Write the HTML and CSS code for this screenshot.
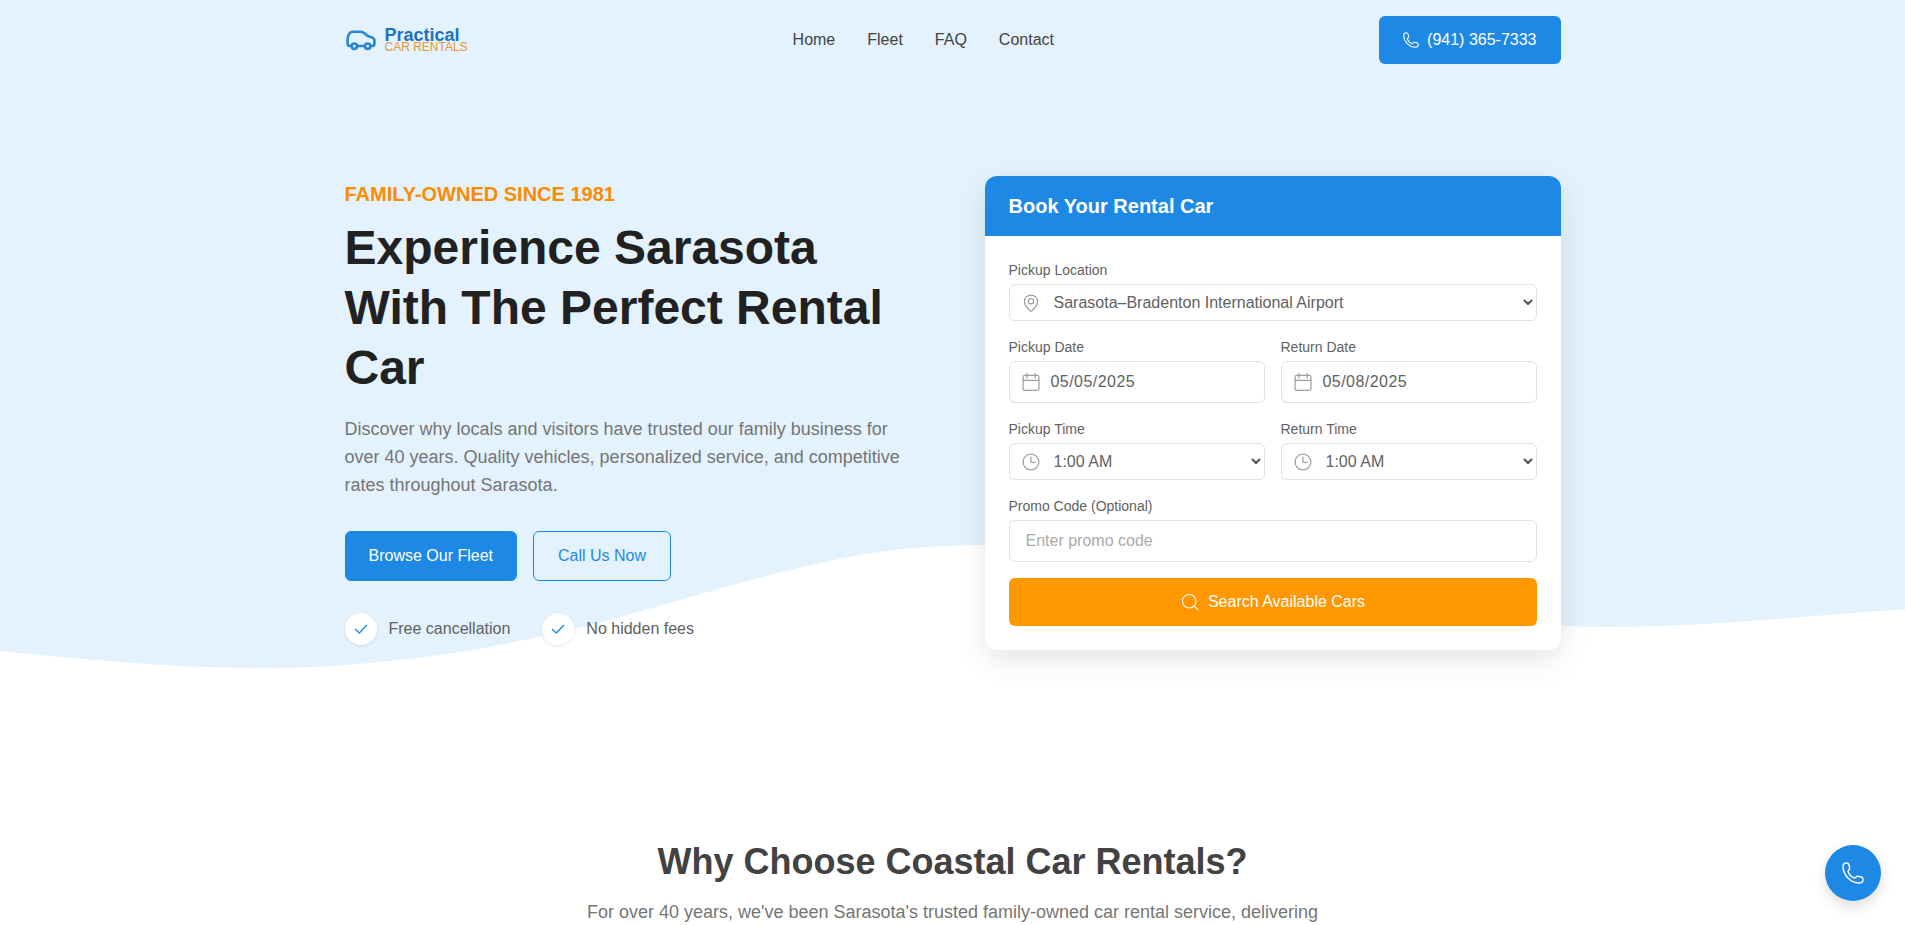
FILE: index.html
```html
<!DOCTYPE html>
<html lang="en">
<head>
<meta charset="utf-8">
<title>Practical Car Rentals</title>
<link rel="stylesheet" href="styles.css">
</head>
<body>
<svg class="symbols" aria-hidden="true">
  <symbol id="phone" viewBox="-1 -1 23 23"><path d="M0 4C0 1.500 1.500 0 3.500 0C5.400 0 6 .500 6.300 2L7 5.500C7.300 7.200 5.300 7.400 5.300 8.800C6.200 11.700 9.200 14.700 12.200 15.700C13.600 15.700 13.800 13.600 15.500 13.900L19.300 14.600C20.700 14.900 21 15.700 21 17.500C21 19.800 19 21 16.500 21C8 20.500 .500 13 0 4Z"/></symbol>
  <symbol id="calendar" viewBox="0 0 24 24"><rect x="2.500" y="4" width="19" height="18" rx="2"/><path d="M2.500 10h19M7 1.500V7M17 1.500V7"/></symbol>
  <symbol id="clock" viewBox="0 0 24 24"><circle cx="12" cy="12" r="9.500"/><path d="M12 6.200v6.300h5"/></symbol>
  <symbol id="pin" viewBox="0 0 24 24"><path d="M12 2.500c-4.400 0-7.900 3.300-7.900 7.500 0 5.800 6 10.600 7.200 11.600a1.100 1.100 0 0 0 1.400 0c1.200-1 7.200-5.800 7.200-11.600C19.900 5.800 16.400 2.500 12 2.500z"/><circle cx="12" cy="9.900" r="3.200"/></symbol>
  <symbol id="check" viewBox="0 0 24 24"><path d="M3.500 12.500 9.500 18 20.500 6.500"/></symbol>
  <symbol id="chevron" viewBox="0 0 10 7"><path d="M1.500 1.500 5 5 8.500 1.500"/></symbol>
</svg>

<section class="hero">
  <svg class="wave" viewBox="0 0 1905 762" preserveAspectRatio="none"><path d="M0 651C87 659.700 174 668 261 668C376 668 492 650.900 607 620.700C648 610 688 597.200 729 586C769 574.900 810 564.400 850 556.700C895 548.200 939 545 984 545C1200 545 1400 627 1608 627C1705 627 1800 616.500 1905 609.300V762H0Z"/></svg>

  <header class="header container">
    <a class="logo" href="#">
      <svg class="car" viewBox="0 0 30 21"><path d="M4.500 16H4C2.500 16 1.600 15 1.600 13.700V9.500C1.600 5.500 3.500 1.700 6.500 1.700H14.500C17.500 1.700 18.800 3.200 21 5.600C23 6.700 28.400 6.800 28.400 10.200V13.700C28.400 15 27.600 16 26.200 16H25.500M12 16H18"/><circle cx="8.300" cy="16.200" r="2.700"/><circle cx="21.700" cy="16.200" r="2.700"/></svg>
      <span class="wordmark"><b>Practical</b><small>CAR RENTALS</small></span>
    </a>
    <nav class="nav"><a href="#">Home</a><a href="#">Fleet</a><a href="#">FAQ</a><a href="#">Contact</a></nav>
    <a class="call" href="#"><svg class="call-icon"><use href="#phone"/></svg>(941) 365-7333</a>
  </header>

  <div class="hero-body container">
    <div class="intro">
      <p class="eyebrow">FAMILY-OWNED SINCE 1981</p>
      <h1>Experience Sarasota With The Perfect Rental Car</h1>
      <p class="lead">Discover why locals and visitors have trusted our family business for over 40 years. Quality vehicles, personalized service, and competitive rates throughout Sarasota.</p>
      <div class="actions"><a class="btn primary" href="#">Browse Our Fleet</a><a class="btn outline" href="#">Call Us Now</a></div>
      <ul class="perks">
        <li><span class="tick"><svg><use href="#check"/></svg></span>Free cancellation</li>
        <li><span class="tick"><svg><use href="#check"/></svg></span>No hidden fees</li>
      </ul>
    </div>

    <div class="card">
      <h2 class="card-title">Book Your Rental Car</h2>
      <div class="form">
        <div class="group"><span class="label">Pickup Location</span><div class="field select"><svg class="icon"><use href="#pin"/></svg><span>Sarasota–Bradenton International Airport</span><svg class="chevron"><use href="#chevron"/></svg></div></div>
        <div class="pair">
          <div class="group"><span class="label">Pickup Date</span><div class="field date"><svg class="icon"><use href="#calendar"/></svg><span>05/05/2025</span></div></div>
          <div class="group"><span class="label">Return Date</span><div class="field date"><svg class="icon"><use href="#calendar"/></svg><span>05/08/2025</span></div></div>
        </div>
        <div class="pair">
          <div class="group"><span class="label">Pickup Time</span><div class="field select"><svg class="icon"><use href="#clock"/></svg><span>1:00 AM</span><svg class="chevron"><use href="#chevron"/></svg></div></div>
          <div class="group"><span class="label">Return Time</span><div class="field select"><svg class="icon"><use href="#clock"/></svg><span>1:00 AM</span><svg class="chevron"><use href="#chevron"/></svg></div></div>
        </div>
        <div class="group"><span class="label">Promo Code (Optional)</span><div class="field promo">Enter promo code</div></div>
        <a class="search" href="#"><svg class="search-icon" viewBox="0 0 24 24"><circle cx="11" cy="11" r="9"/><path d="m17.500 17.500 5 5"/></svg>Search Available Cars</a>
      </div>
    </div>
  </div>
</section>

<section class="why">
  <h2>Why Choose Coastal Car Rentals?</h2>
  <p>For over 40 years, we've been Sarasota's trusted family-owned car rental service, delivering</p>
</section>

<a class="fab" href="#" aria-label="Call"><svg><use href="#phone"/></svg></a>
</body>
</html>
```

FILE: styles.css
```css
* { box-sizing: border-box; margin: 0; padding: 0; }
html, body { height: 100%; overflow: hidden; }
body { font-family: "Liberation Sans", Arial, sans-serif; font-size: 16px; line-height: 24px; color: #616161; background: #fff; }
a { color: inherit; text-decoration: none; }
ul { list-style: none; }
svg { fill: none; stroke: currentColor; stroke-linecap: round; stroke-linejoin: round; }
.symbols { position: absolute; width: 0; height: 0; }
#phone { stroke-width: 1.500; }
#calendar, #clock, #pin { stroke-width: 1.500; }
#check { stroke-width: 2; }
#chevron { stroke-width: 2; }
.icon { width: 20px; height: 20px; flex: none; }
.container { width: 1280px; margin: 0 auto; padding: 0 32px; }

.hero { position: relative; height: 762px; background: #e3f2fd; }
.wave { position: absolute; inset: 0; width: 100%; height: 100%; stroke: none; fill: #fff; }

.header { position: relative; height: 80px; display: flex; justify-content: space-between; align-items: center; }
.logo { display: flex; align-items: center; gap: 9px; }
.car { width: 30px; height: 21px; margin-left: 1px; stroke: #2985d6; stroke-width: 2.600; }
.wordmark { display: flex; flex-direction: column; width: 83px; white-space: nowrap; }
.wordmark b { font-size: 18px; line-height: 14px; color: #1d72c0; }
.wordmark small { font-size: 12px; line-height: 11px; color: #e69434; }
.nav { display: flex; gap: 32px; color: #424242; }
.call { display: flex; align-items: center; gap: 8px; height: 48px; padding: 0 24px; border-radius: 6px; background: #1e88e5; color: #fff; }
.call-icon { width: 16px; height: 16px; }

.hero-body { position: relative; display: grid; grid-template-columns: 1fr 1fr; gap: 64px; align-items: start; padding-top: 96px; }
.intro { padding-top: 4px; }
.eyebrow { font-size: 20px; line-height: 28px; font-weight: 700; color: #fb8c00; margin-bottom: 10px; }
h1 { font-size: 48px; line-height: 60px; color: #212121; margin-bottom: 17px; }
.lead { font-size: 18px; line-height: 28px; color: #757575; margin-bottom: 32px; }
.actions { display: flex; gap: 16px; margin-bottom: 32px; }
.btn { height: 50px; line-height: 48px; padding: 0 23px; border: 1px solid #1e88e5; border-radius: 6px; }
.primary { background: #1e88e5; color: #fff; }
.outline { padding: 0 24px; color: #1e88e5; }
.perks { display: flex; gap: 32px; }
.perks li { display: flex; align-items: center; gap: 12px; }
.tick { width: 32px; height: 32px; display: grid; place-items: center; border-radius: 50%; background: #fff; color: #1e88e5; box-shadow: 0 1px 3px rgba(0, 0, 0, .1); }
.tick svg { width: 16px; height: 16px; }

.card { height: 474px; border-radius: 12px; background: #fff; overflow: hidden; box-shadow: 0 10px 30px rgba(0, 0, 0, .1); }
.card-title { height: 60px; padding: 0 24px; font-size: 20px; line-height: 60px; color: #fff; background: #1e88e5; }
.form { display: flex; flex-direction: column; gap: 16px; padding: 24px; }
.pair { display: grid; grid-template-columns: 1fr 1fr; gap: 16px; }
.group { display: flex; flex-direction: column; gap: 4px; }
.label { font-size: 14px; line-height: 20px; }
.field { display: flex; align-items: center; height: 42px; padding: 0 11px; border: 1px solid #e0e0e0; border-radius: 6px; }
.field .icon { color: #9e9e9e; }
.select { height: 37px; gap: 13px; padding-right: 3px; }
.select .icon { margin-top: 1px; }
.date { gap: 10px; letter-spacing: .45px; }
.chevron { width: 10px; height: 7px; margin-left: auto; color: #555; }
.promo { padding: 0 16px; color: #aaa; }
.search { display: flex; align-items: center; justify-content: center; gap: 9px; height: 48px; border-radius: 6px; background: #ff9800; color: #fff; }
.search-icon { width: 18px; height: 18px; margin-left: 1px; stroke-width: 1.500; }

.why { padding-top: 80px; text-align: center; }
.why h2 { font-size: 36px; line-height: 40px; color: #424242; margin-bottom: 16px; }
.why p { font-size: 18px; line-height: 28px; color: #757575; }

.fab { position: fixed; right: 24px; bottom: 24px; width: 56px; height: 56px; display: grid; place-items: center; border-radius: 50%; background: #1e88e5; color: #fff; box-shadow: 0 6px 14px rgba(0, 0, 0, .13); }
.fab svg { width: 22px; height: 22px; }
```
